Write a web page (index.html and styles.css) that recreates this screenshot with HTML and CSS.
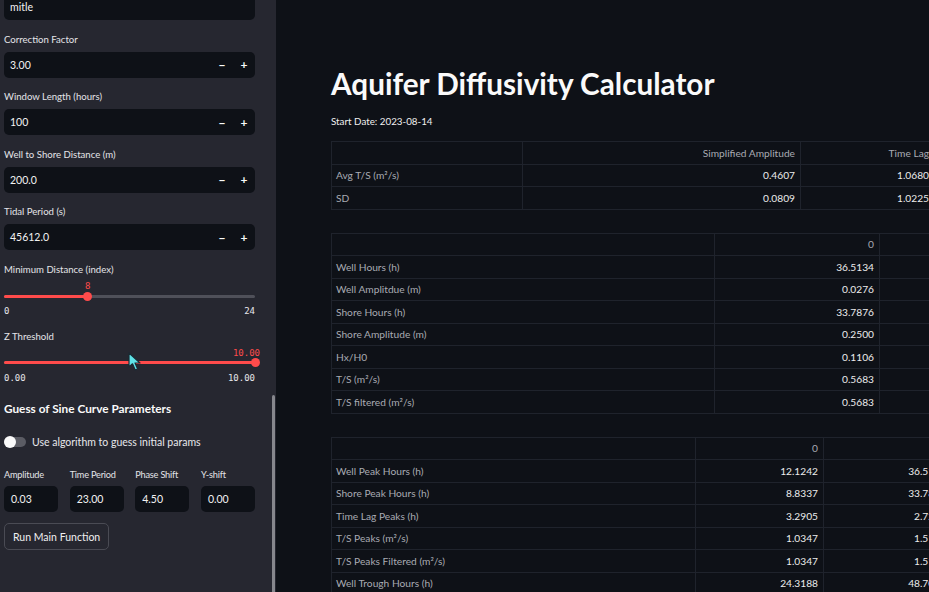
FILE: index.html
```html
<!DOCTYPE html>
<html lang="en">
<head>
<meta charset="utf-8">
<title>Aquifer Diffusivity Calculator</title>
<link rel="stylesheet" href="styles.css">
</head>
<body>
<div class="app">
  <aside class="sidebar">
    <div class="sidebar-inner">
      <div class="field field-cut">
        <div class="text-input">mitle</div>
      </div>

      <div class="field">
        <div class="label">Correction Factor</div>
        <div class="num-input"><span class="num-value">3.00</span><span class="step">&minus;</span><span class="step">+</span></div>
      </div>

      <div class="field">
        <div class="label">Window Length (hours)</div>
        <div class="num-input"><span class="num-value">100</span><span class="step">&minus;</span><span class="step">+</span></div>
      </div>

      <div class="field">
        <div class="label">Well to Shore Distance (m)</div>
        <div class="num-input"><span class="num-value">200.0</span><span class="step">&minus;</span><span class="step">+</span></div>
      </div>

      <div class="field">
        <div class="label">Tidal Period (s)</div>
        <div class="num-input"><span class="num-value">45612.0</span><span class="step">&minus;</span><span class="step">+</span></div>
      </div>

      <div class="field field-slider">
        <div class="label">Minimum Distance (index)</div>
        <div class="slider">
          <div class="slider-value-row"><span class="slider-value" style="left:33.33%">8</span></div>
          <div class="track"><div class="fill" style="width:33.33%"></div><div class="thumb" style="left:33.33%"></div></div>
          <div class="ticks"><span>0</span><span>24</span></div>
        </div>
      </div>

      <div class="field field-slider field-z">
        <div class="label">Z Threshold</div>
        <div class="slider">
          <div class="slider-value-row"><span class="slider-value slider-value-end">10.00</span></div>
          <div class="track"><div class="fill" style="width:100%"></div><div class="thumb" style="left:100%"></div></div>
          <div class="ticks"><span>0.00</span><span>10.00</span></div>
        </div>
      </div>

      <h3 class="side-heading">Guess of Sine Curve Parameters</h3>

      <div class="toggle-row">
        <span class="toggle"><span class="knob"></span></span>
        <span class="toggle-label">Use algorithm to guess initial params</span>
      </div>

      <div class="param-grid">
        <div class="param"><div class="label small">Amplitude</div><div class="small-input">0.03</div></div>
        <div class="param"><div class="label small">Time Period</div><div class="small-input">23.00</div></div>
        <div class="param"><div class="label small">Phase Shift</div><div class="small-input">4.50</div></div>
        <div class="param"><div class="label small">Y-shift</div><div class="small-input">0.00</div></div>
      </div>

      <button class="run-btn" type="button">Run Main Function</button>
    </div>
    <div class="scrollbar"></div>
  </aside>

  <main class="main">
    <h1 class="title">Aquifer Diffusivity Calculator</h1>
    <p class="start-date">Start Date: 2023-08-14</p>

    <table class="grid grid-1">
      <colgroup><col class="c-idx"><col class="c-a"><col class="c-b"></colgroup>
      <tr class="head"><td></td><td>Simplified Amplitude</td><td>Time Lag</td></tr>
      <tr><td>Avg T/S (m²/s)</td><td>0.4607</td><td>1.0680</td></tr>
      <tr><td>SD</td><td>0.0809</td><td>1.0225</td></tr>
    </table>

    <table class="grid grid-2">
      <colgroup><col class="c-idx"><col class="c-a"><col class="c-b"></colgroup>
      <tr class="head"><td></td><td>0</td><td></td></tr>
      <tr><td>Well Hours (h)</td><td>36.5134</td><td></td></tr>
      <tr><td>Well Amplitdue (m)</td><td>0.0276</td><td></td></tr>
      <tr><td>Shore Hours (h)</td><td>33.7876</td><td></td></tr>
      <tr><td>Shore Amplitude (m)</td><td>0.2500</td><td></td></tr>
      <tr><td>Hx/H0</td><td>0.1106</td><td></td></tr>
      <tr><td>T/S (m²/s)</td><td>0.5683</td><td></td></tr>
      <tr><td>T/S filtered (m²/s)</td><td>0.5683</td><td></td></tr>
    </table>

    <table class="grid grid-3">
      <colgroup><col class="c-idx"><col class="c-a"><col class="c-b"></colgroup>
      <tr class="head"><td></td><td>0</td><td>1</td></tr>
      <tr><td>Well Peak Hours (h)</td><td>12.1242</td><td>36.5134</td></tr>
      <tr><td>Shore Peak Hours (h)</td><td>8.8337</td><td>33.7876</td></tr>
      <tr><td>Time Lag Peaks (h)</td><td>3.2905</td><td>2.7258</td></tr>
      <tr><td>T/S Peaks (m²/s)</td><td>1.0347</td><td>1.5102</td></tr>
      <tr><td>T/S Peaks Filtered (m²/s)</td><td>1.0347</td><td>1.5102</td></tr>
      <tr><td>Well Trough Hours (h)</td><td>24.3188</td><td>48.7021</td></tr>
    </table>
  </main>
</div>

<svg class="cursor" width="14" height="20" viewBox="0 0 14 20" aria-hidden="true">
  <path d="M1 1 L1 15 L4.5 11.8 L7.2 18 L9.6 17 L7 11 L12 11 Z" fill="#5fe3e8" stroke="#1a2a33" stroke-width="1.2" stroke-linejoin="round"/>
</svg>
</body>
</html>
```

FILE: styles.css
```css
* { box-sizing: border-box; }

html, body {
  margin: 0;
  padding: 0;
  width: 929px;
  height: 592px;
  overflow: hidden;
  background: #0e1117;
  font-family: Lato, "Open Sans", sans-serif;
  color: #fafafa;
}

.app {
  display: flex;
  width: 929px;
  height: 592px;
}

/* ---------- Sidebar ---------- */
.sidebar {
  position: relative;
  flex: 0 0 276px;
  height: 592px;
  background: #262730;
  overflow: hidden;
}

.sidebar-inner {
  width: 255px;
  padding-left: 4px;
  margin-top: -6px;
}

.field {
  margin-bottom: 12.5px;
}

.label {
  font-size: 9.6px;
  line-height: 14px;
  height: 14px;
  color: #e4e4e8;
  margin-bottom: 5px;
  white-space: nowrap;
}

.text-input,
.num-input {
  height: 26px;
  background: #0e1117;
  border-radius: 5px;
  display: flex;
  align-items: center;
  font-size: 10.5px;
  color: #f2f2f2;
  padding-left: 6px;
}

.num-value { flex: 1; }

.step {
  width: 22px;
  text-align: center;
  font-size: 12px;
  font-weight: 700;
  color: #fafafa;
}

/* slider */
.slider {
  margin-top: -2px;
}

.slider-value-row {
  position: relative;
  height: 12px;
  margin-bottom: 3px;
}

.slider-value {
  position: absolute;
  top: 0;
  transform: translateX(-50%);
  font-family: "DejaVu Sans Mono", "Liberation Mono", monospace;
  font-size: 9px;
  line-height: 12px;
  color: #ff4b4b;
}

.slider-value-end {
  left: auto;
  right: -5px;
  transform: none;
}

.track {
  position: relative;
  height: 3px;
  background: #4f5059;
  border-radius: 2px;
}

.fill {
  height: 3px;
  background: #ff4b4b;
  border-radius: 2px;
}

.thumb {
  position: absolute;
  top: -3px;
  width: 9px;
  height: 9px;
  margin-left: -4.5px;
  border-radius: 50%;
  background: #ff4b4b;
}

.ticks {
  display: flex;
  justify-content: space-between;
  margin-top: 7px;
  font-family: "DejaVu Sans Mono", "Liberation Mono", monospace;
  font-size: 9px;
  line-height: 12px;
  color: #e6e6ea;
}

.field-slider { margin-bottom: 13.5px; }
.field-z .slider-value-row { margin-bottom: 2px; }
.field-z .ticks { margin-top: 8px; }

.side-heading {
  margin: 17px 0 0;
  font-size: 11.8px;
  line-height: 16px;
  font-weight: 700;
  color: #fafafa;
}

.toggle-row {
  display: flex;
  align-items: center;
  gap: 6px;
  margin-top: 18px;
  height: 14px;
}

.toggle {
  position: relative;
  width: 22px;
  height: 10px;
  border-radius: 5px;
  background: #5b5c64;
  display: inline-block;
}

.knob {
  position: absolute;
  left: 0;
  top: -1px;
  width: 12px;
  height: 12px;
  border-radius: 50%;
  background: #fafafa;
}

.toggle-label {
  font-size: 10.5px;
  color: #e8e8ec;
}

.param-grid {
  display: grid;
  grid-template-columns: repeat(4, 1fr);
  column-gap: 11.5px;
  margin-top: 19px;
}

.label.small {
  font-size: 9.2px;
  margin-bottom: 4px;
  letter-spacing: -0.2px;
}

.small-input {
  height: 26px;
  background: #0e1117;
  border-radius: 5px;
  display: flex;
  align-items: center;
  padding-left: 7px;
  font-size: 10.5px;
  color: #f2f2f2;
}

.run-btn {
  margin-top: 11px;
  height: 27px;
  padding: 0 8px;
  background: transparent;
  border: 1px solid #4a4b54;
  border-radius: 5px;
  color: #f0f0f0;
  font-family: Lato, "Open Sans", sans-serif;
  font-size: 10.5px;
}

.scrollbar {
  position: absolute;
  left: 272px;
  top: 395px;
  width: 3px;
  height: 200px;
  background: #86878d;
  border-radius: 2px;
}

/* ---------- Main ---------- */
.main {
  flex: 1;
  min-width: 0;
  padding: 64px 0 0 55px;
  overflow: hidden;
}

.title {
  margin: 0;
  font-size: 29.7px;
  line-height: 40px;
  font-weight: 700;
  color: #fafafa;
  letter-spacing: 0;
  white-space: nowrap;
}

.start-date {
  margin: 10px 0 0;
  font-size: 9.8px;
  line-height: 14px;
  color: #f0f0f0;
}

.grid {
  border-collapse: collapse;
  table-layout: fixed;
  font-size: 10.2px;
  margin-top: 13px;
}

.grid + .grid { margin-top: 23px; }

.grid td {
  height: 22.5px;
  padding: 0 5px 0 4px;
  border: 1px solid #1f232c;
  text-align: right;
  color: #ececec;
  white-space: nowrap;
  overflow: hidden;
}

.grid td:first-child {
  text-align: left;
  color: #a9abb3;
}

.grid .head td {
  color: #a9abb3;
}

.grid-1 { width: 603px; }
.grid-1 .c-idx { width: 191px; }
.grid-1 .c-a { width: 278px; }
.grid-1 .c-b { width: 134px; }

.grid-2 { width: 700px; }
.grid-2 .c-idx { width: 383px; }
.grid-2 .c-a { width: 165px; }
.grid-2 .c-b { width: 152px; }

.grid-3 { width: 620px; }
.grid-3 .c-idx { width: 364px; }
.grid-3 .c-a { width: 128px; }
.grid-3 .c-b { width: 128px; }

.cursor {
  position: absolute;
  left: 128px;
  top: 352px;
}
```
